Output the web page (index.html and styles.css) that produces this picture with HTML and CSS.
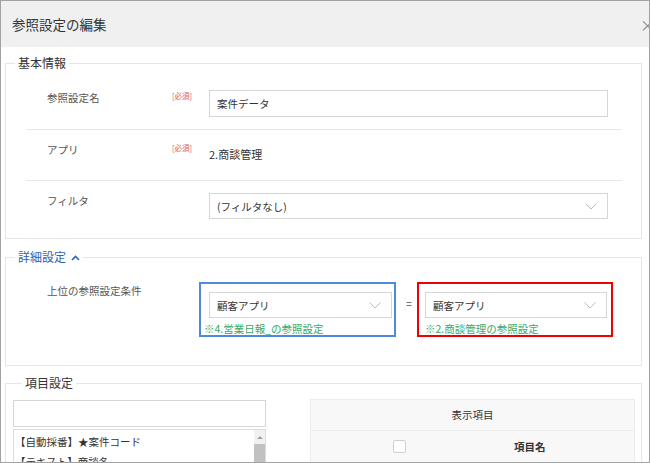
FILE: index.html
```html
<!DOCTYPE html>
<html lang="ja">
<head>
    <meta charset="UTF-8">
    <meta name="viewport" content="width=device-width, initial-scale=1.0">
    <title>参照設定の編集</title>
    <link rel="stylesheet" href="styles.css">
</head>
<body>
    <div class="dialog">
        <div class="dialog-header">
            <span class="dialog-title">参照設定の編集</span>
            <span class="close">×</span>
        </div>
        <div class="dialog-body">
            <fieldset class="section">
                <legend>基本情報</legend>
                <div class="rows">
                    <div class="row">
                        <div class="label">参照設定名</div>
                        <div class="req">[必須]</div>
                        <input type="text" class="input" value="案件データ">
                    </div>
                    <div class="row">
                        <div class="label">アプリ</div>
                        <div class="req">[必須]</div>
                        <div class="value">2.商談管理</div>
                    </div>
                    <div class="row">
                        <div class="label">フィルタ</div>
                        <div class="req"></div>
                        <div class="select">
                            <span>(フィルタなし)</span>
                            <svg class="chev" width="12" height="7" viewBox="0 0 12 7"><polyline points="0.5,0.5 6,6 11.5,0.5" fill="none" stroke="#bdbdbd" stroke-width="1"/></svg>
                        </div>
                    </div>
                </div>
            </fieldset>

            <fieldset class="section section-detail">
                <legend class="legend-link">詳細設定
                    <svg width="9" height="6" viewBox="0 0 9 6"><polyline points="1,5 4.5,1.5 8,5" fill="none" stroke="#2f63b3" stroke-width="1.6"/></svg>
                </legend>
                <div class="cond-row">
                    <div class="label cond-label">上位の参照設定条件</div>
                    <div class="cond cond-blue">
                        <div class="select">
                            <span>顧客アプリ</span>
                            <svg class="chev" width="12" height="7" viewBox="0 0 12 7"><polyline points="0.5,0.5 6,6 11.5,0.5" fill="none" stroke="#bdbdbd" stroke-width="1"/></svg>
                        </div>
                        <div class="note note-shift">※4.営業日報_の参照設定</div>
                    </div>
                    <div class="eq">=</div>
                    <div class="cond cond-red">
                        <div class="select">
                            <span>顧客アプリ</span>
                            <svg class="chev" width="12" height="7" viewBox="0 0 12 7"><polyline points="0.5,0.5 6,6 11.5,0.5" fill="none" stroke="#bdbdbd" stroke-width="1"/></svg>
                        </div>
                        <div class="note">※2.商談管理の参照設定</div>
                    </div>
                </div>
            </fieldset>

            <fieldset class="section section-items">
                <legend>項目設定</legend>
                <div class="items">
                    <div class="picker">
                        <input type="text" class="input search">
                        <div class="list">
                            <div class="list-items">
                                <div class="list-item">【自動採番】★案件コード</div>
                                <div class="list-item">【テキスト】商談名</div>
                            </div>
                            <div class="scrollbar">
                                <div class="scroll-up"></div>
                                <div class="scroll-thumb"></div>
                            </div>
                        </div>
                    </div>
                    <div class="table">
                        <div class="table-head">表示項目</div>
                        <div class="table-row">
                            <div class="cell-check"><span class="checkbox"></span></div>
                            <div class="cell-name">項目名</div>
                        </div>
                    </div>
                </div>
            </fieldset>
        </div>
    </div>
</body>
</html>
```

FILE: styles.css
```css
body {
    margin: 0;
    font-family: "Noto Sans CJK JP", "Liberation Sans", sans-serif;
    color: #333;
}
.dialog {
    width: 650px;
    height: 463px;
    box-sizing: border-box;
    border: 1px solid #a3a3a3;
    overflow: hidden;
    background: #fff;
}
.dialog-header {
    height: 46px;
    background: #f0f0f0;
    display: flex;
    align-items: center;
    justify-content: space-between;
    padding-left: 11px;
}
.dialog-title {
    font-size: 13.5px;
    color: #333;
}
.close {
    font-size: 15px;
    color: #8a8a8a;
    margin-right: -6px;
}
.dialog-body {
    padding: 0 7px 0 4px;
}

/* sections */
.section {
    margin: 8px 0 0;
    padding: 7px 0 7px;
    border: 1px solid #e6e6e6;
    min-width: 0;
}
.section legend {
    margin-left: 9px;
    padding: 0 3px;
    font-size: 12px;
    line-height: 16px;
    color: #333;
}
.section-detail {
    margin-top: 10px;
}
.section-items {
    margin-top: 9px;
    padding: 8px 7px 20px;
}
.legend-link {
    color: #2f63b3 !important;
}
.legend-link svg {
    margin-left: 2px;
    vertical-align: 1px;
}

/* form rows */
.rows {
    margin: 0 19px 0 20px;
}
.row {
    display: grid;
    grid-template-columns: 125px 37px 1fr;
    align-items: start;
    min-height: 26px;
    padding: 12px 14px 12px 21px;
}
.row + .row {
    border-top: 1px solid #e8e8e8;
}
.label {
    font-size: 10.5px;
    line-height: 16px;
    color: #555;
}
.req {
    font-size: 7.5px;
    line-height: 12px;
    color: #e05a5a;
}
.value {
    padding-top: 4px;
    font-size: 11px;
    line-height: 16px;
    color: #333;
}
.input {
    box-sizing: border-box;
    height: 27px;
    width: 100%;
    border: 1px solid #d6d6d6;
    padding: 0 7px;
    font-family: inherit;
    font-size: 10.5px;
    color: #333;
    outline: none;
}
.select {
    box-sizing: border-box;
    height: 26px;
    border: 1px solid #d6d6d6;
    display: flex;
    align-items: center;
    justify-content: space-between;
    padding: 0 10px 0 7px;
    font-size: 10.5px;
    color: #333;
    background: #fff;
}

/* reference condition */
.cond-row {
    display: flex;
    align-items: flex-start;
    padding: 10px 0 21px 41px;
}
.cond-label {
    flex: 0 0 152px;
    padding-top: 1px;
}
.cond {
    border: 2px solid;
    padding: 8px 2px 0 8px;
}
.cond-blue {
    width: 183px;
    border-color: #5088dc;
}
.cond-red {
    width: 182px;
    border-color: #f00000;
    padding: 8px 4px 0 6px;
}
.eq {
    flex: 0 0 21px;
    padding: 14px 0 0 5px;
    box-sizing: border-box;
    text-align: center;
    font-size: 10.5px;
    color: #555;
}
.note {
    margin-top: 4px;
    font-size: 10.5px;
    line-height: 13px;
    color: #37a866;
    white-space: nowrap;
}
.note-shift {
    margin-left: -5px;
}

/* item settings */
.items {
    display: flex;
    gap: 44px;
    align-items: flex-start;
}
.picker {
    flex: 0 0 253px;
}
.list {
    margin-top: 2px;
    border: 1px solid #dcdcdc;
    display: flex;
    height: 60px;
}
.list-items {
    flex: 1;
    padding-top: 2px;
}
.list-item {
    padding-left: 1px;
    font-size: 10.5px;
    line-height: 20px;
    color: #333;
}
.scrollbar {
    flex: 0 0 11px;
    background: #f1f1f1;
    display: flex;
    flex-direction: column;
    align-items: center;
}
.scroll-up {
    margin-top: 6px;
    width: 0;
    height: 0;
    border-left: 3px solid transparent;
    border-right: 3px solid transparent;
    border-bottom: 3px solid #a3a3a3;
}
.scroll-thumb {
    margin-top: 5px;
    width: 11px;
    flex: 1;
    background: #c1c1c1;
}
.table {
    flex: 0 0 323px;
    border: 1px solid #ececec;
    background: #f8f8f8;
    height: 80px;
}
.table-head {
    height: 30px;
    line-height: 29px;
    text-align: center;
    font-size: 10.5px;
    border-bottom: 1px solid #ececec;
    color: #333;
}
.table-row {
    display: grid;
    grid-template-columns: 176px 1fr;
    align-items: center;
    padding-top: 8px;
}
.cell-check {
    display: flex;
    justify-content: center;
}
.checkbox {
    width: 13px;
    height: 13px;
    box-sizing: border-box;
    border: 1px solid #cfcfcf;
    border-radius: 2px;
    background: #fff;
}
.cell-name {
    padding-left: 27px;
    font-size: 10.5px;
    font-weight: bold;
    color: #333;
}
```
